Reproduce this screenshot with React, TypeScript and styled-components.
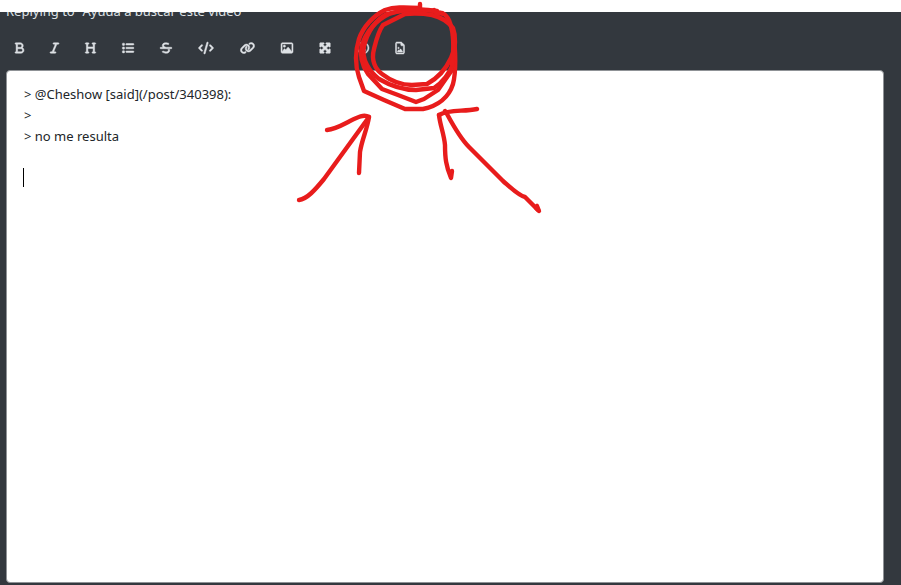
import React from "react";
import styled, { createGlobalStyle } from "styled-components";
import type { IconType } from "react-icons";
import {
  FaBold,
  FaItalic,
  FaHeading,
  FaList,
  FaStrikethrough,
  FaCode,
  FaLink,
  FaRegImage,
  FaMaximize,
  FaRegFaceSmile,
  FaRegFileImage,
} from "react-icons/fa6";

const GlobalStyle = createGlobalStyle`
  *, *::before, *::after { box-sizing: border-box; }
  body {
    margin: 0;
    background: #fff;
    font-family: "Noto Sans", "Open Sans", sans-serif;
  }
`;

const Page = styled.div`
  position: relative;
  display: flex;
  flex-direction: column;
  height: 100vh;
  padding-top: 12px;
  overflow: hidden;
`;

const Composer = styled.main`
  flex: 1;
  display: flex;
  flex-direction: column;
  min-height: 0;
  background: #33383e;
`;

const TitleBar = styled.header`
  display: flex;
  align-items: flex-end;
  height: 9px;
  padding-left: 6px;
  overflow: hidden;
`;

const Title = styled.h1`
  margin: 0;
  font-size: 13px;
  font-weight: 400;
  line-height: 20px;
  color: #dee2e6;
  white-space: nowrap;
`;

const Toolbar = styled.div`
  display: flex;
  align-items: center;
  height: 49px;
  padding: 4px 2px 0;
`;

const ToolButton = styled.button<{ $width: number }>`
  display: flex;
  padding: 8px 13px;
  border: 0;
  background: none;
  color: #dee2e6;
  cursor: pointer;

  svg {
    width: ${({ $width }) => $width}px;
    height: 12px;
    overflow: visible;
    stroke: currentColor;
    stroke-width: 20;
  }
`;

const Editor = styled.div`
  position: relative;
  flex: 1;
  display: flex;
  margin: 0 17px 2px 6px;
`;

const TextArea = styled.textarea`
  flex: 1;
  padding: 13px 17px;
  border: 1px solid #8f9296;
  border-radius: 4px;
  outline: 0;
  resize: none;
  background: #fff;
  color: #212529;
  font-family: inherit;
  font-size: 13px;
  line-height: 21px;
`;

const Caret = styled.span`
  position: absolute;
  top: 98px;
  left: 17px;
  width: 1px;
  height: 19px;
  background: #000;
`;

const Ink = styled.svg`
  position: absolute;
  top: 0;
  left: 0;
  width: 901px;
  height: 585px;
  fill: none;
  stroke: #e81c1c;
  stroke-width: 4.4;
  stroke-linecap: round;
  stroke-linejoin: round;
  pointer-events: none;
`;

const tools: { label: string; icon: IconType; width: number }[] = [
  { label: "Bold", icon: FaBold, width: 9 },
  { label: "Italic", icon: FaItalic, width: 9 },
  { label: "Heading", icon: FaHeading, width: 11 },
  { label: "List", icon: FaList, width: 12 },
  { label: "Strikethrough", icon: FaStrikethrough, width: 12 },
  { label: "Code", icon: FaCode, width: 16 },
  { label: "Link", icon: FaLink, width: 15 },
  { label: "Picture", icon: FaRegImage, width: 12 },
  { label: "Zen mode", icon: FaMaximize, width: 12 },
  { label: "Emoji", icon: FaRegFaceSmile, width: 12 },
  { label: "Upload image", icon: FaRegFileImage, width: 10 },
];

const draft = "> @Cheshow [said](/post/340398):\n>\n> no me resulta\n\n";

const strokes = [
  "M420 4 L420 8 C403 7 394 7 385 10 C373 16 363 27 359 39 C355 52 355 65 359 77 L364 91 L384 100 L405 109 L423 109 C438 106 449 97 453 84 C456 72 456 50 453 35",
  "M437 11 C420 8 402 10 389 14 C376 20 366 32 362 45 C359 58 363 67 368 74 L382 89 L398 95 L416 102 L424 99 L438 90 L452 70",
  "M443 14 C430 8 405 9 387 14 C374 21 367 34 364 46 C361 60 370 72 379 79 C391 86 403 90 416 90 L434 88 C443 82 450 72 454 62",
  "M405 14 L383 25 C378 32 376 41 374 49 C371 60 375 69 382 74 C391 81 402 85 412 85 L427 84 C438 78 446 69 451 58 C456 48 456 36 453 28 C447 20 440 17 432 15 Q420 13 405 14",
  "M434 10 L437 14 C442 10 448 16 450 23 C454 34 454 48 452 64",
  "M299 200 C307 199 315 190 324 179 L369 117 C364 114 358 117 350 121 C342 125 336 129 327 130",
  "M369 117 C367 130 362 139 360 152 L359 173",
  "M538 210 L525 197 C519 196 511 188 503 181 L469 147 C460 138 454 127 447 114 L445 111 M439 115 C450 109 463 112 477 109",
  "M439 115 C440 125 444 134 445 145 C445 158 446 166 451 178 L452 171",
  "M537 206 L539 211 L536 208 L537 206",
];

export default function App() {
  return (
    <Page>
      <GlobalStyle />
      <Composer>
        <TitleBar>
          <Title>Replying to "Ayuda a buscar este video"</Title>
        </TitleBar>
        <Toolbar role="toolbar" aria-label="Formatting">
          {tools.map(({ label, icon: Icon, width }) => (
            <ToolButton key={label} type="button" aria-label={label} $width={width}>
              <Icon />
            </ToolButton>
          ))}
        </Toolbar>
        <Editor>
          <TextArea aria-label="Reply" defaultValue={draft} spellCheck={false} />
          <Caret />
        </Editor>
      </Composer>
      <Ink viewBox="0 0 901 585" aria-hidden="true">
        {strokes.map((d) => (
          <path key={d} d={d} />
        ))}
      </Ink>
    </Page>
  );
}
